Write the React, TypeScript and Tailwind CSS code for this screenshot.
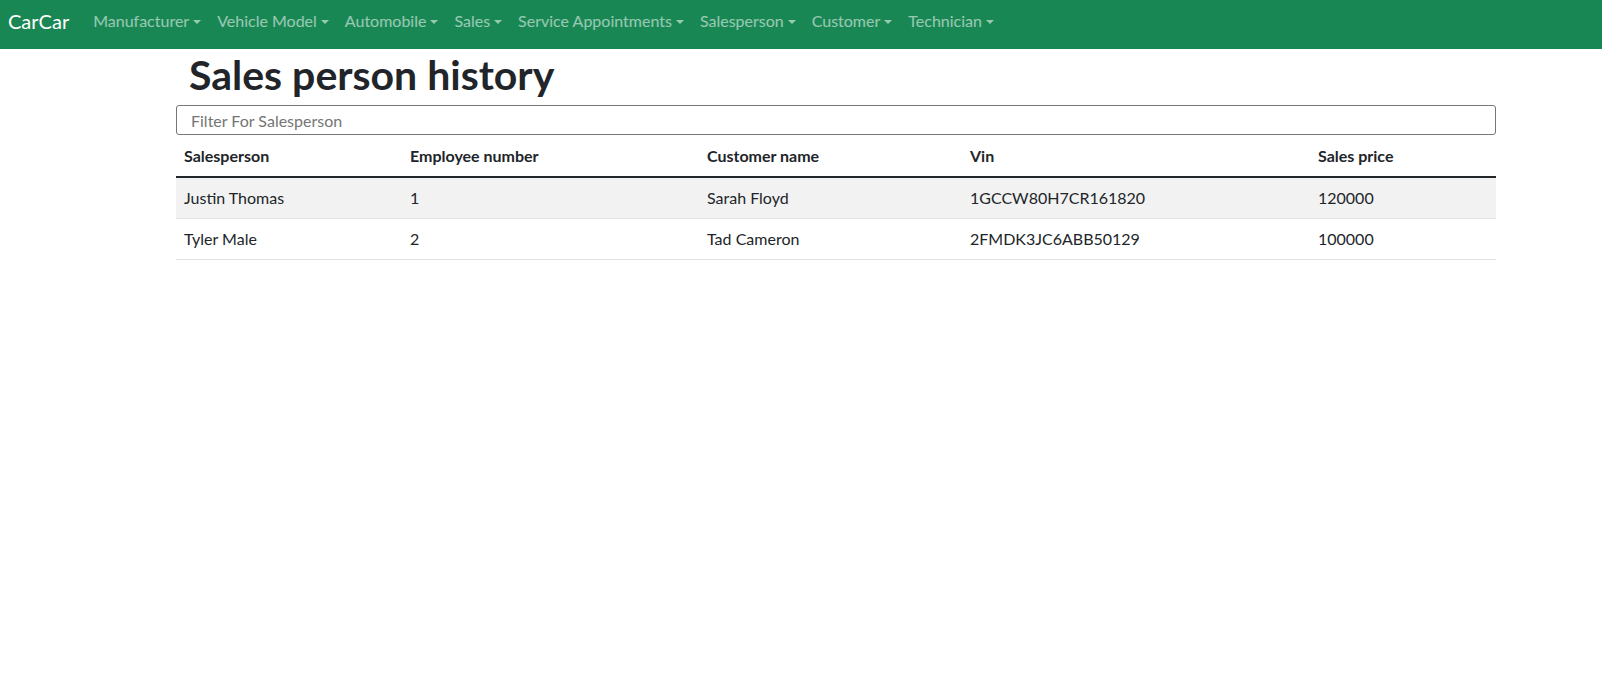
const navItems = [
  "Manufacturer",
  "Vehicle Model",
  "Automobile",
  "Sales",
  "Service Appointments",
  "Salesperson",
  "Customer",
  "Technician",
];

const sales = [
  { salesperson: "Justin Thomas", employee: "1", customer: "Sarah Floyd", vin: "1GCCW80H7CR161820", price: "120000" },
  { salesperson: "Tyler Male", employee: "2", customer: "Tad Cameron", vin: "2FMDK3JC6ABB50129", price: "100000" },
];

export default function App() {
  return (
    <div className="min-h-screen bg-white text-[#212529]" style={{ fontFamily: "Lato, 'Noto Sans', sans-serif" }}>
      <nav className="h-[49px] bg-[#198754] flex items-center px-2 pb-[7px]">
        <a className="text-white text-[20px] leading-[30px] mr-4">CarCar</a>
        <ul className="flex items-center">
          {navItems.map((item) => (
            <li key={item} className="px-2 text-[16px] leading-[24px] text-white/55 flex items-center">
              {item}
              <span className="ml-[4px] mt-[2px] inline-block w-0 h-0 border-t-[4.8px] border-t-current border-x-[4.8px] border-x-transparent" />
            </li>
          ))}
        </ul>
      </nav>

      <div className="ml-[176px] w-[1320px]">
        <h1 className="mt-[2px] pl-[13px] text-[41px] leading-[48px] font-bold">Sales person history</h1>
        <input
          className="mt-[6px] block w-full h-[30px] px-[14px] text-[16px] border border-[#767676] rounded-[3px] placeholder:text-[#757575] outline-none"
          placeholder="Filter For Salesperson"
        />
        <table className="mt-px w-full border-collapse text-[16px] leading-[24px]">
          <thead>
            <tr className="border-b-2 border-[#212529]">
              <th className="w-[226px] px-2 py-2 text-left font-bold">Salesperson</th>
              <th className="w-[297px] px-2 py-2 text-left font-bold">Employee number</th>
              <th className="w-[263px] px-2 py-2 text-left font-bold">Customer name</th>
              <th className="w-[348px] px-2 py-2 text-left font-bold">Vin</th>
              <th className="px-2 py-2 text-left font-bold">Sales price</th>
            </tr>
          </thead>
          <tbody>
            {sales.map((s, i) => (
              <tr key={s.vin} className={`border-b border-[#dee2e6] ${i % 2 === 0 ? "bg-[#f2f2f2]" : "bg-white"}`}>
                <td className="px-2 py-2">{s.salesperson}</td>
                <td className="px-2 py-2">{s.employee}</td>
                <td className="px-2 py-2">{s.customer}</td>
                <td className="px-2 py-2">{s.vin}</td>
                <td className="px-2 py-2">{s.price}</td>
              </tr>
            ))}
          </tbody>
        </table>
      </div>
    </div>
  );
}
